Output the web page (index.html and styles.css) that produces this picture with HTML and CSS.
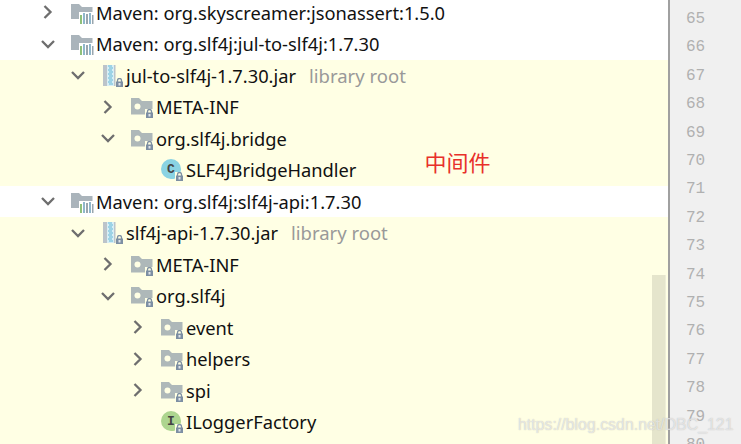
FILE: index.html
```html
<!DOCTYPE html>
<html lang="en">
<head>
    <meta charset="UTF-8">
    <meta name="viewport" content="width=device-width, initial-scale=1.0">
    <title>Project tree</title>
    <link rel="stylesheet" href="styles.css">
</head>
<body>

<svg class="defs" width="0" height="0">
    <symbol id="arrow-right" viewBox="0 0 16 16">
        <path d="M4.500 2 L10.500 8 L4.500 14" fill="none" stroke="#6e6e6e" stroke-width="2.300"/>
    </symbol>
    <symbol id="arrow-down" viewBox="0 0 16 16">
        <path d="M2 5 L8 11 L14 5" fill="none" stroke="#6e6e6e" stroke-width="2.300"/>
    </symbol>
    <symbol id="lock" viewBox="0 0 8 9">
        <path d="M2 4 V2.500 a2 2 0 0 1 4 0 V4" fill="none" stroke="#7d8fa3" stroke-width="1.300"/>
        <rect x="0.500" y="3.500" width="7" height="5.500" fill="#7d8fa3"/>
        <rect x="3" y="5" width="2" height="2.500" fill="#dfe4ea"/>
    </symbol>
    <symbol id="maven" viewBox="0 0 23 23">
        <path d="M0 3 H8 L11 6 H21.500 V11 H8 V18 H0 Z" fill="#aab4bb"/>
        <rect x="9" y="14" width="2" height="9" fill="#8fc07a"/>
        <rect x="12" y="12" width="2" height="11" fill="#8fb7cc"/>
        <rect x="15" y="13" width="2" height="10" fill="#9aa6ae"/>
        <rect x="18" y="12" width="2" height="11" fill="#8fb7cc"/>
        <rect x="21" y="14" width="1.500" height="9" fill="#9aa6ae"/>
    </symbol>
    <symbol id="jar" viewBox="0 0 23 23">
        <rect x="2" y="1" width="12.500" height="21" fill="#bcc4ca"/>
        <rect x="6" y="1" width="7" height="21" fill="#d8eef5"/>
        <path d="M7 2 h4 M8 4 h4 M7 6 h4 M8 8 h4 M7 10 h4 M8 12 h4 M7 14 h4 M8 16 h4 M7 18 h4 M8 20 h4" stroke="#62b8d8" stroke-width="1.200"/>
        <use href="#lock" x="14.500" y="14" width="8" height="9"/>
    </symbol>
    <symbol id="package" viewBox="0 0 23 23">
        <path d="M0 3 H8 L11 6 H21.500 V14 H14 V19.500 H0 Z" fill="#aeb8b9"/>
        <circle cx="6.500" cy="11.500" r="3" fill="#ffffe4"/>
        <use href="#lock" x="14.500" y="14" width="8" height="9"/>
    </symbol>
    <symbol id="class" viewBox="0 0 23 23">
        <path d="M10 1 a10 10 0 0 1 10 10 a10 10 0 0 1 -0.500 3 H14 V20.500 a10 10 0 0 1 -4 0.500 a10 10 0 0 1 0 -20 Z" fill="#8ad3e3"/>
        <text x="10" y="15" class="badge">C</text>
        <use href="#lock" x="14.500" y="14" width="8" height="9"/>
    </symbol>
    <symbol id="interface" viewBox="0 0 23 23">
        <path d="M10 1 a10 10 0 0 1 10 10 a10 10 0 0 1 -0.500 3 H14 V20.500 a10 10 0 0 1 -4 0.500 a10 10 0 0 1 0 -20 Z" fill="#add58f"/>
        <text x="10" y="15" class="badge">I</text>
        <use href="#lock" x="14.500" y="14" width="8" height="9"/>
    </symbol>
</svg>

<div class="window">
    <div class="tree">
        <div class="row lv1 plain">
            <svg class="arrow"><use href="#arrow-right"/></svg>
            <svg class="icon"><use href="#maven"/></svg>
            <span>Maven: org.skyscreamer:jsonassert:1.5.0</span>
        </div>
        <div class="row lv1 plain">
            <svg class="arrow"><use href="#arrow-down"/></svg>
            <svg class="icon"><use href="#maven"/></svg>
            <span>Maven: org.slf4j:jul-to-slf4j:1.7.30</span>
        </div>
        <div class="row lv2">
            <svg class="arrow"><use href="#arrow-down"/></svg>
            <svg class="icon"><use href="#jar"/></svg>
            <span>jul-to-slf4j-1.7.30.jar</span>
            <span class="hint">library root</span>
        </div>
        <div class="row lv3">
            <svg class="arrow"><use href="#arrow-right"/></svg>
            <svg class="icon"><use href="#package"/></svg>
            <span>META-INF</span>
        </div>
        <div class="row lv3">
            <svg class="arrow"><use href="#arrow-down"/></svg>
            <svg class="icon"><use href="#package"/></svg>
            <span>org.slf4j.bridge</span>
        </div>
        <div class="row lv4">
            <svg class="arrow"></svg>
            <svg class="icon"><use href="#class"/></svg>
            <span>SLF4JBridgeHandler</span>
        </div>
        <div class="row lv1 plain">
            <svg class="arrow"><use href="#arrow-down"/></svg>
            <svg class="icon"><use href="#maven"/></svg>
            <span>Maven: org.slf4j:slf4j-api:1.7.30</span>
        </div>
        <div class="row lv2">
            <svg class="arrow"><use href="#arrow-down"/></svg>
            <svg class="icon"><use href="#jar"/></svg>
            <span>slf4j-api-1.7.30.jar</span>
            <span class="hint">library root</span>
        </div>
        <div class="row lv3">
            <svg class="arrow"><use href="#arrow-right"/></svg>
            <svg class="icon"><use href="#package"/></svg>
            <span>META-INF</span>
        </div>
        <div class="row lv3">
            <svg class="arrow"><use href="#arrow-down"/></svg>
            <svg class="icon"><use href="#package"/></svg>
            <span>org.slf4j</span>
        </div>
        <div class="row lv4">
            <svg class="arrow"><use href="#arrow-right"/></svg>
            <svg class="icon"><use href="#package"/></svg>
            <span>event</span>
        </div>
        <div class="row lv4">
            <svg class="arrow"><use href="#arrow-right"/></svg>
            <svg class="icon"><use href="#package"/></svg>
            <span>helpers</span>
        </div>
        <div class="row lv4">
            <svg class="arrow"><use href="#arrow-right"/></svg>
            <svg class="icon"><use href="#package"/></svg>
            <span>spi</span>
        </div>
        <div class="row lv4">
            <svg class="arrow"></svg>
            <svg class="icon"><use href="#interface"/></svg>
            <span>ILoggerFactory</span>
        </div>
        <div class="row lv4"></div>

        <div class="note">中间件</div>
        <div class="scrollbar"></div>
    </div>

    <div class="gutter">
        <div>65</div>
        <div>66</div>
        <div>67</div>
        <div>68</div>
        <div>69</div>
        <div>70</div>
        <div>71</div>
        <div>72</div>
        <div>73</div>
        <div>74</div>
        <div>75</div>
        <div>76</div>
        <div>77</div>
        <div>78</div>
        <div>79</div>
        <div>80</div>
    </div>
</div>

<div class="watermark">https://blog.csdn.net/DBC_121</div>

</body>
</html>
```

FILE: styles.css
```css
html, body {
    height: 100%;
}
body {
    margin: 0;
    overflow: hidden;
    background-color: #fff;
    font-family: "Noto Sans", "Noto Sans CJK SC", sans-serif;
    color: #111;
}
.defs {
    display: block;
    height: 0;
}
.window {
    display: flex;
    height: 444px;
    overflow: hidden;
    position: relative;
}
.tree {
    width: 668px;
    margin-top: -3.500px;
    position: relative;
    overflow: hidden;
    background-color: #ffffe4;
}
.row {
    display: flex;
    align-items: center;
    height: 31.500px;
    font-size: 18.300px;
    white-space: nowrap;
}
.row.plain {
    background-color: #fff;
}
.lv1 { padding-left: 40px; }
.lv2 { padding-left: 70px; }
.lv3 { padding-left: 100px; }
.lv4 { padding-left: 130px; }
.arrow {
    width: 16px;
    height: 16px;
    margin-right: 15px;
    flex: none;
}
.icon {
    width: 23px;
    height: 23px;
    margin-right: 2px;
    flex: none;
}
.badge {
    font-family: "Liberation Mono", monospace;
    font-size: 13px;
    font-weight: bold;
    fill: #444;
    text-anchor: middle;
}
.row .hint {
    margin-left: 13px;
    color: #999;
    font-size: 18.500px;
}
.note {
    position: absolute;
    left: 424.500px;
    top: 149.500px;
    color: #e8302a;
    font-size: 22px;
    line-height: 32px;
}
.scrollbar {
    position: absolute;
    left: 652px;
    top: 278.500px;
    bottom: 0;
    width: 13px;
    background-color: #e5e5cc;
    border-right: 1px solid #eeeed8;
}
.gutter {
    flex: 1;
    border-left: 2px solid #a0a0a0;
    background-color: #f0f0f0;
    padding-left: 16px;
    padding-top: 5px;
    font-family: "Liberation Mono", monospace;
    font-size: 16px;
    line-height: 28.400px;
    color: #b0b0b0;
}
.watermark {
    position: absolute;
    left: 518px;
    top: 412px;
    font-family: "Liberation Sans", sans-serif;
    font-size: 15.900px;
    line-height: 26px;
    color: rgba(255, 255, 255, 0.6);
    text-shadow: 0 0 1px rgba(150, 150, 150, 0.7);
}
```
